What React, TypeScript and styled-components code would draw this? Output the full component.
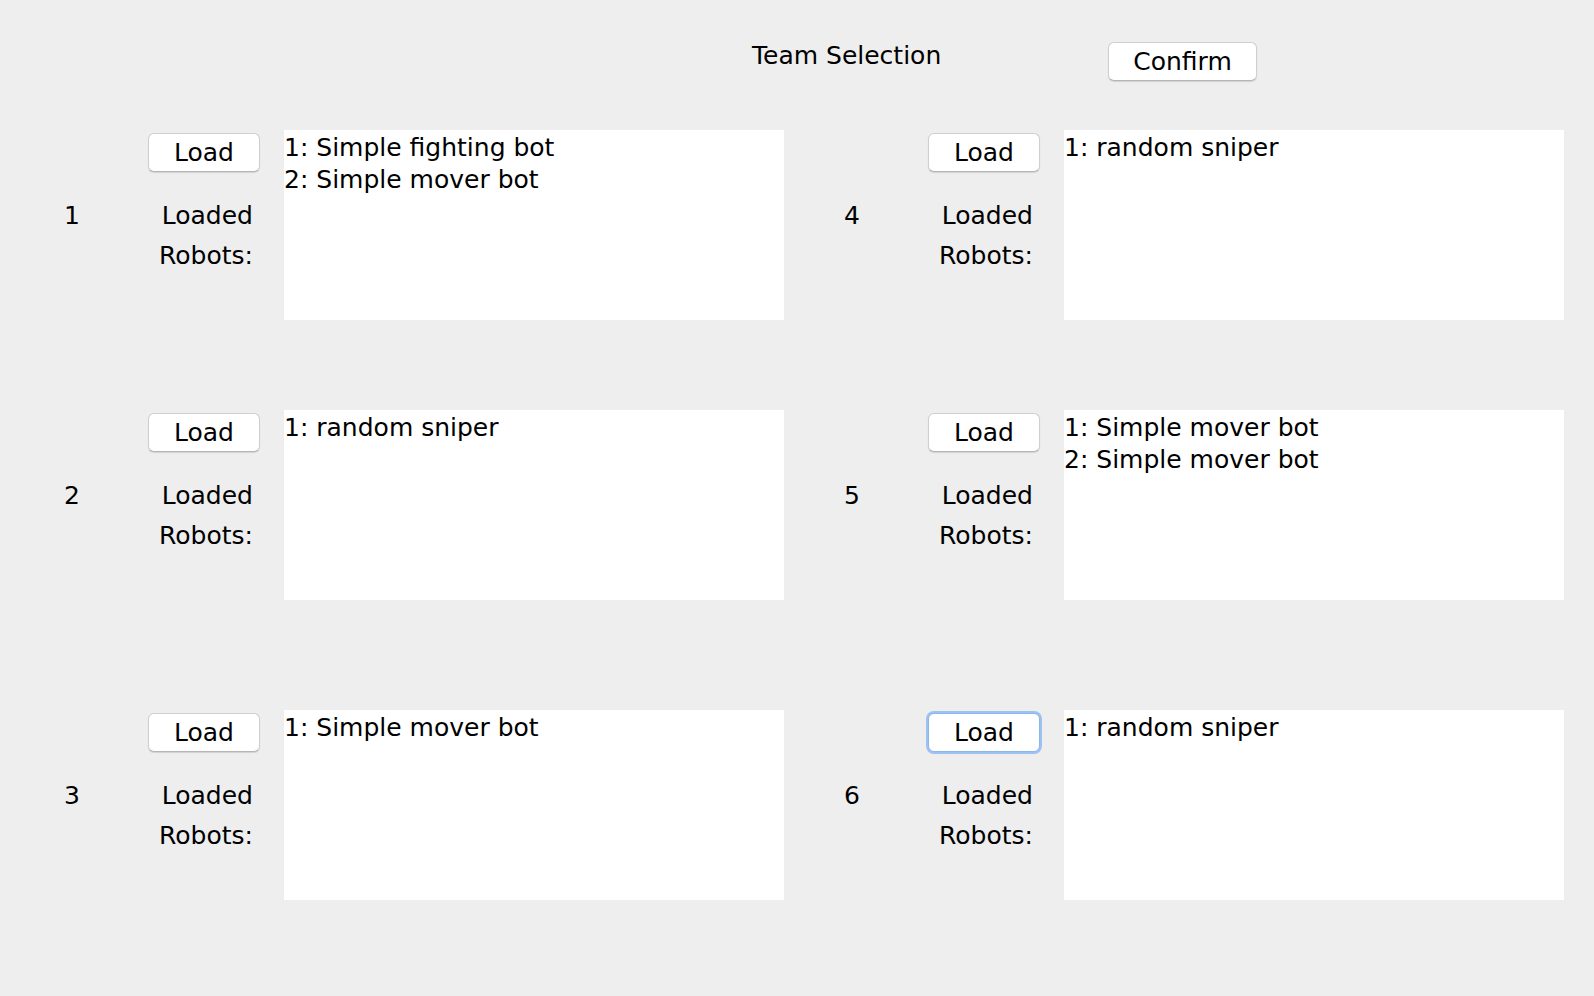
import React, { FC } from 'react';
import styled, { createGlobalStyle } from 'styled-components';

const GlobalStyle = createGlobalStyle`
  html, body {
    margin: 0;
    padding: 0;
    background: #eeeeee;
  }

  body {
    font-family: "DejaVu Sans", "Liberation Sans", sans-serif;
    font-size: 25px;
    color: #000000;
  }
`;

const Frame = styled.div`
  width: 1594px;
  height: 996px;
  background: #eeeeee;
  overflow: hidden;
`;

const Header = styled.div`
  display: flex;
  align-items: flex-start;
  height: 130px;
  padding-left: 752px;
  box-sizing: border-box;
`;

const Title = styled.p`
  margin: 41px 0 0;
  width: 356px;
  line-height: 29px;
  white-space: nowrap;
`;

const Button = styled.button<{ $focused?: boolean }>`
  box-sizing: border-box;
  height: 39px;
  padding: 0;
  border: 1px solid ${(p) => (p.$focused ? '#8cb6ec' : '#cfcfcf')};
  border-bottom-color: ${(p) => (p.$focused ? '#8cb6ec' : '#b5b5b5')};
  border-radius: 6px;
  background: #ffffff;
  box-shadow: ${(p) => (p.$focused
    ? '0 0 0 2px #9cc2f2'
    : '0 1px 1px rgba(0, 0, 0, 0.12)')};
  font-family: inherit;
  font-size: 25px;
  line-height: 37px;
  color: #000000;
  text-align: center;
  cursor: pointer;
  outline: none;
`;

const ConfirmButton = styled(Button)`
  width: 149px;
  margin-top: 42px;
  flex-shrink: 0;
`;

const TeamGrid = styled.div`
  display: grid;
  grid-template-columns: 780px 784px;
  grid-template-rows: 280px 300px 190px;
  grid-auto-flow: column;
`;

const TeamCell = styled.div`
  width: 784px;
  display: flex;
  align-items: flex-start;
`;

const TeamNumber = styled.div`
  flex: 0 0 144px;
  margin-top: 66px;
  line-height: 40px;
  text-align: center;
`;

const Controls = styled.div`
  flex: 0 0 116px;
  display: flex;
  flex-direction: column;
  align-items: flex-end;
`;

const LoadButton = styled(Button)`
  width: 112px;
  margin-top: 3px;
`;

const LoadedLabel = styled.div`
  margin-top: 24px;
  padding-right: 7px;
  line-height: 40px;
  text-align: right;
`;

const RobotList = styled.div`
  box-sizing: border-box;
  flex: 0 0 500px;
  height: 190px;
  margin-left: 24px;
  padding: 2px 0 0;
  background: #ffffff;
  line-height: 32px;
  white-space: nowrap;
  overflow: hidden;
`;

const RobotLine = styled.div``;

type Team = {
  id: number;
  robots: string[];
  focused?: boolean;
};

const teams: Team[] = [
  { id: 1, robots: ['Simple fighting bot', 'Simple mover bot'] },
  { id: 2, robots: ['random sniper'] },
  { id: 3, robots: ['Simple mover bot'] },
  { id: 4, robots: ['random sniper'] },
  { id: 5, robots: ['Simple mover bot', 'Simple mover bot'] },
  { id: 6, robots: ['random sniper'], focused: true },
];

const TeamPanel: FC<{ team: Team }> = ({ team }) => (
  <TeamCell>
    <TeamNumber>{team.id}</TeamNumber>
    <Controls>
      <LoadButton $focused={team.focused}>Load</LoadButton>
      <LoadedLabel>
        Loaded
        <br />
        Robots:
      </LoadedLabel>
    </Controls>
    <RobotList>
      {team.robots.map((name, i) => (
        <RobotLine key={`${team.id}-${i}`}>{`${i + 1}: ${name}`}</RobotLine>
      ))}
    </RobotList>
  </TeamCell>
);

const App: FC = () => (
  <Frame>
    <GlobalStyle />
    <Header>
      <Title>Team Selection</Title>
      <ConfirmButton>Confirm</ConfirmButton>
    </Header>
    <TeamGrid>
      {teams.map((team) => (
        <TeamPanel key={team.id} team={team} />
      ))}
    </TeamGrid>
  </Frame>
);

export default App;
